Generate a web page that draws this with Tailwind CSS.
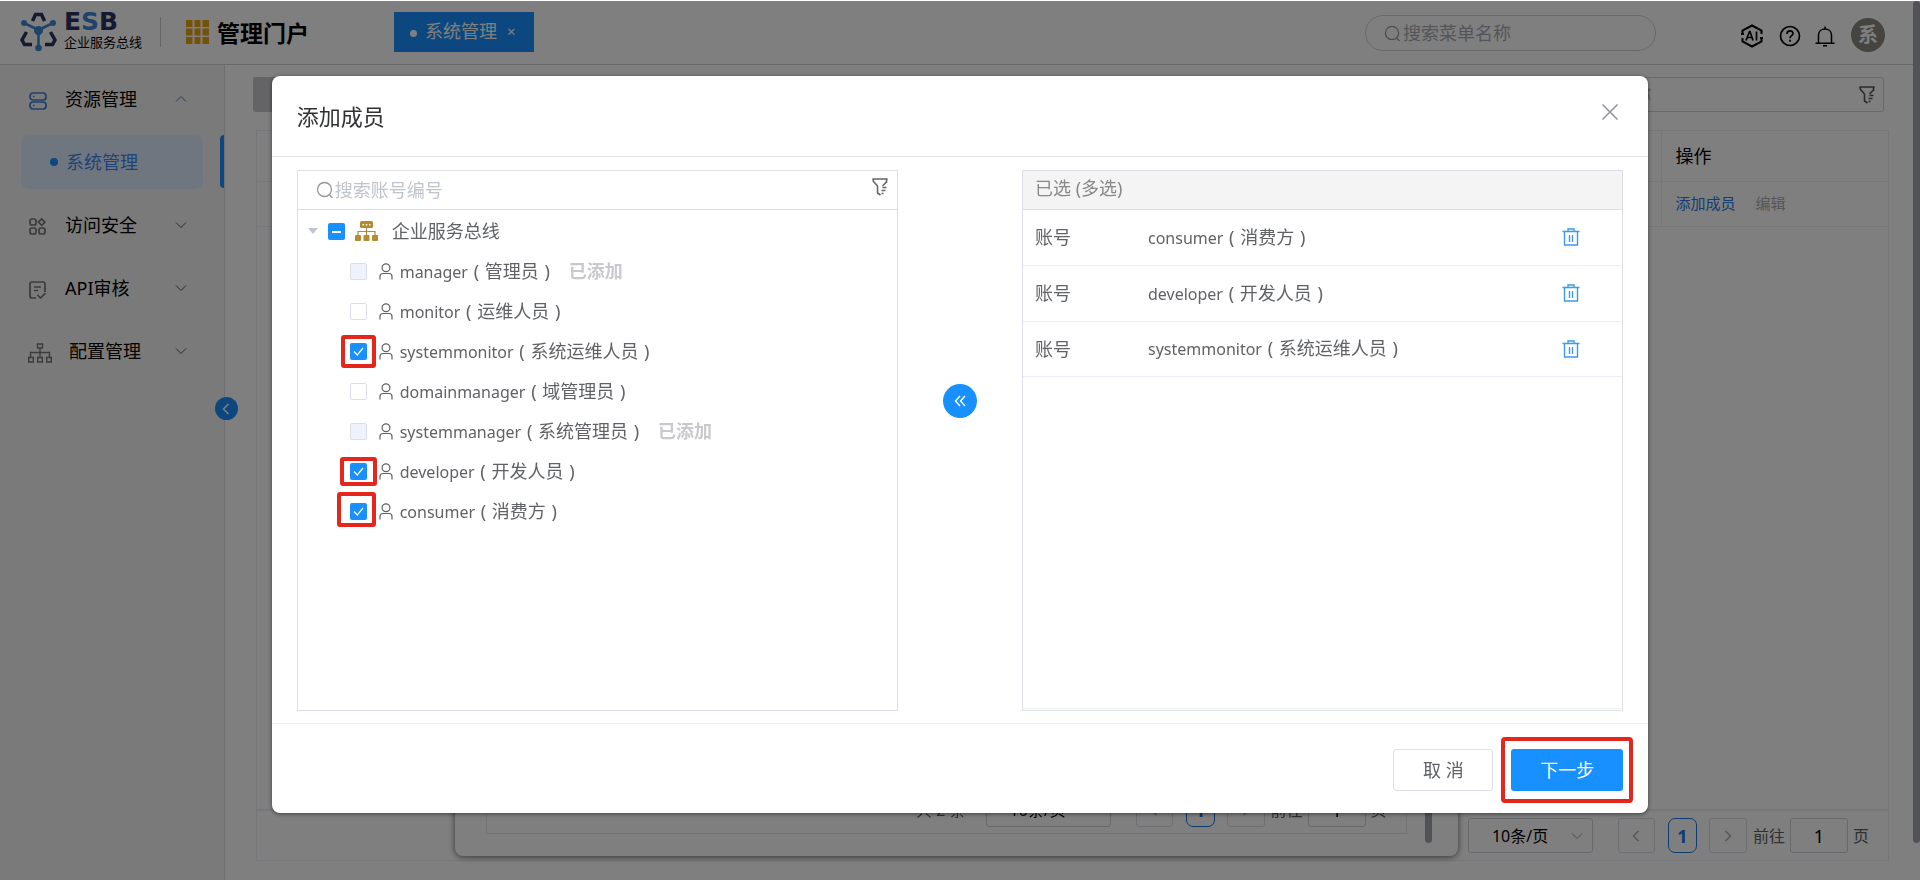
<!DOCTYPE html>
<html lang="zh-CN">
<head>
    <meta charset="UTF-8">
    <meta name="viewport" content="width=device-width, initial-scale=1.0">
    <title>ESB 管理门户 - 系统管理</title>
    <script src="https://cdn.jsdelivr.net/npm/@tailwindcss/browser@4"></script>
</head>
<body class="h-screen overflow-hidden bg-white font-['Noto_Sans','Noto_Sans_CJK_SC',sans-serif] text-[18px] leading-6 text-black">

    <!-- Icons shared by several places -->
    <svg class="hidden">
        <symbol id="i-search" viewBox="0 0 18 18"><circle cx="8.500" cy="8.500" r="7" fill="none" stroke="currentColor" stroke-width="1.300"/><path d="M13.500 14l3 3" stroke="currentColor" stroke-width="1.300"/></symbol>
        <symbol id="i-down" viewBox="0 0 12 8"><path d="M1 1.500l5 5 5-5" fill="none" stroke="currentColor" stroke-width="1"/></symbol>
        <symbol id="i-left" viewBox="0 0 8 12"><path d="M6.500 1l-5 5 5 5" fill="none" stroke="currentColor" stroke-width="1.500"/></symbol>
        <symbol id="i-funnel" viewBox="0 0 16 18"><path d="M14.500 5V2.500L15 1H1l.5 2.500L5.500 8v7l3 2M14.500 4L10.500 8M10.500 9.500h4M9.500 12.500h4M9.500 15.500h2" fill="none" stroke="currentColor" stroke-width="1.600" stroke-linejoin="round"/></symbol>
        <symbol id="i-user" viewBox="0 0 14 17"><circle cx="7" cy="4.700" r="3.900" fill="none" stroke="currentColor" stroke-width="1.200"/><path d="M1 16.500v-3c0-2 1-3 3-3h6c2 0 3 1 3 3v3" fill="none" stroke="currentColor" stroke-width="1.200"/></symbol>
        <symbol id="i-trash" viewBox="0 0 18 18"><path d="M.5 3.500h17M6 3V1h6v2M2.500 4v13h13V4M7.500 7v7M10.500 7v7" fill="none" stroke="currentColor" stroke-width="1.400"/></symbol>
        <symbol id="i-tick" viewBox="0 0 17 17"><path d="M4 8.500l3.300 3.500L13 5" fill="none" stroke="#fff" stroke-width="1.200"/></symbol>
    </svg>

    <div class="flex h-full flex-col">
        <header class="flex h-[65px] shrink-0 items-center border-b border-[#d4d4d4] pr-[35px] pl-[20px]">
            <svg class="h-[40px] w-[37px]" viewBox="0 0 37 40" fill="none">
                <path d="M12.500 9l3-6.500h6l3 6.500M6.500 20l-4.500 8 2.500 4.500h7.500M30.500 20l4.500 8-2.500 4.500H25" stroke="#2d3561" stroke-width="3.500"/>
                <path d="M4 11l14.500 7L33 11M18.500 19v16" stroke="#3f88d8" stroke-width="2.500"/>
                <circle cx="4" cy="11" r="3" fill="#3f88d8"/><circle cx="33" cy="11" r="3" fill="#3f88d8"/>
                <circle cx="18.500" cy="18.500" r="4.500" fill="#3f88d8"/><circle cx="18.500" cy="36" r="3.300" fill="#3f88d8"/>
            </svg>
            <div class="mb-[2px] ml-[7px] w-[80px] whitespace-nowrap">
                <div class="font-['DejaVu_Sans'] text-[25px] leading-[22px] font-bold text-[#2d3561]">E<span class="text-[#3f88d8]">S</span>B</div>
                <div class="text-[13px] leading-[18px]">企业服务总线</div>
            </div>
            <div class="ml-4 h-[30px] w-px bg-[#ccc]"></div>
            <svg class="ml-[25px] h-[24px] w-[23px]" viewBox="0 0 23 24" fill="#e6a410">
                <path d="M0 0h6.500v7H0zM8.500 0h6v7h-6zM16.500 0H23v7h-6.500zM0 8.500h6.500v7H0zM8.500 8.500h6v7h-6zM16.500 8.500H23v7h-6.500zM0 17h6.500v7H0zM8.500 17h6v7h-6zM16.500 17H23v7h-6.500z"/>
            </svg>
            <h1 class="mt-[2px] ml-2 w-[92px] text-[23px] font-bold whitespace-nowrap">管理门户</h1>
            <div class="ml-[85px] flex h-[40px] w-[140px] shrink-0 items-center bg-[#1890ff] pb-[2px] pl-4 text-white">
                <span class="mt-1 mr-2 size-[7px] rounded-full bg-white"></span>系统管理
                <button class="ml-[10px] text-[15px]" aria-label="关闭标签">×</button>
            </div>
            <label class="mt-[2px] ml-auto flex h-[36px] w-[291px] items-center rounded-full border border-[#d0d3d9] pl-[18px] text-[#999]">
                <svg class="size-[17px] shrink-0"><use href="#i-search"/></svg>
                <input class="ml-[2px] w-full min-w-0 text-[18px] outline-none placeholder:text-[#a8abb2]" placeholder="搜索菜单名称" aria-label="搜索菜单名称">
            </label>
            <button class="ml-[84px]" aria-label="AI 助手">
                <svg class="mt-2 h-[24px] w-[24px]" viewBox="0 0 24 24" fill="none" stroke="#000" stroke-width="2">
                    <path d="M2.500 10V6.500L12 1.500l9.500 5V10M2.500 14v3.500l9.500 5 9.500-5V14M1 10h3M20 14h3"/>
                    <path d="M6 16.500l3.500-9h.5l3 9M7.500 13.500h4.500M16.500 7.500v9" stroke-width="1.700"/>
                </svg>
            </button>
            <button class="ml-[15px]" aria-label="帮助">
                <svg class="mt-2 size-[22px]" viewBox="0 0 22 22" fill="none" stroke="#000" stroke-width="1.700">
                    <circle cx="11" cy="11" r="9.500"/><path d="M8 9c0-4 6-4 6-.5 0 2.200-3 2.200-3 4.700M11 14.800v2"/>
                </svg>
            </button>
            <button class="ml-[14px]" aria-label="通知">
                <svg class="mt-2 h-[22px] w-[20px]" viewBox="0 0 20 22" fill="none" stroke="#000" stroke-width="1.500">
                    <path d="M.5 18.200h19M3.500 18v-8c0-8 13-8 13 0v8M10 4V1.500M8 20.700h4"/>
                </svg>
            </button>
            <span class="mt-[6px] ml-4 flex size-[34px] items-center justify-center rounded-full bg-[#8d8881] text-[20px] font-bold text-white">系</span>
        </header>

        <div class="flex min-h-0 flex-1">
            <aside class="relative w-[225px] shrink-0 border-r border-[#dcdfe6] bg-[#f4f4f4] pt-[2px]">
                <nav>
                    <a href="#" class="flex h-[63px] items-center pl-[29px]">
                        <svg class="mt-1 h-[18px] w-[18px]" viewBox="0 0 18 18" fill="none" stroke="#3f7fd6" stroke-width="1.700"><rect x="1" y="1" width="16" height="7" rx="3"/><rect x="1" y="10" width="16" height="7" rx="3"/><path d="M4 4.500h1.500M4 13.500h1.500"/></svg>
                        <span class="ml-[18px] w-[110px]">资源管理</span>
                        <svg class="h-[8px] w-[12px] rotate-180 text-[#4a7fc0]"><use href="#i-down"/></svg>
                    </a>
                    <div class="flex h-[63px] items-center justify-between pl-[21px]">
                        <a href="#" class="flex h-[54px] w-[182px] items-center rounded-lg bg-[#e0edff] pl-[29px] text-[#3a86ee]"><span class="mr-2 size-[8px] rounded-full bg-[#1890ff]"></span>系统管理</a>
                        <span class="h-[53px] w-[4px] rounded-l bg-[#1890ff]"></span>
                    </div>
                    <a href="#" class="flex h-[63px] items-center pl-[29px]">
                        <svg class="mt-1 size-[17px]" viewBox="0 0 17 17" fill="none" stroke="#777" stroke-width="1.700"><rect x="1" y="1" width="6" height="6" rx="2"/><path d="M12.700.8l3.300 3.300-3.300 3.300L9.400 4.100z"/><rect x="1" y="10" width="6" height="6" rx="2"/><rect x="10" y="10" width="6" height="6" rx="2"/></svg>
                        <span class="ml-[19px] w-[110px]">访问安全</span>
                        <svg class="h-[8px] w-[12px] text-[#555]"><use href="#i-down"/></svg>
                    </a>
                    <a href="#" class="flex h-[63px] items-center pl-[29px]">
                        <svg class="mt-1 h-[18px] w-[17px]" viewBox="0 0 17 18" fill="none" stroke="#777" stroke-width="1.700"><path d="M16 11V3q0-2-2-2H3Q1 1 1 3v12q0 2 2 2h4M5 6h7M5 9.500h4M8.500 14l3 3 5-5"/></svg>
                        <span class="ml-[19px] w-[110px]">API审核</span>
                        <svg class="h-[8px] w-[12px] text-[#555]"><use href="#i-down"/></svg>
                    </a>
                    <a href="#" class="flex h-[63px] items-center pl-[28px]">
                        <svg class="mt-1 h-[20px] w-[24px]" viewBox="0 0 24 20" fill="none" stroke="#777" stroke-width="1.400"><path d="M9.500 1h5v4h-5zM12 5v9M2.500 14v-4.500h19V14M.7 14.500h4.600V19H.7zM9.700 14.500h4.600V19H9.700zM18.700 14.500h4.600V19h-4.600z"/></svg>
                        <span class="ml-[17px] w-[106px]">配置管理</span>
                        <svg class="h-[8px] w-[12px] text-[#555]"><use href="#i-down"/></svg>
                    </a>
                </nav>
                <button class="absolute top-[332px] -right-[14px] flex size-[23px] items-center justify-center rounded-full bg-[#1890ff] text-white" aria-label="收起菜单">
                    <svg class="mr-[2px] h-[12px] w-[8px]"><use href="#i-left"/></svg>
                </button>
            </aside>

            <main class="flex min-w-0 flex-1 flex-col pr-[31px] pb-[19px] pl-[31px]">
                <div class="-ml-[3px] flex h-[47px] items-end justify-between pr-[5px]">
                    <button class="h-[35px] w-[90px] rounded-[3px] bg-[#c8c9cc]" aria-label="新增"></button>
                    <label class="flex h-[35px] w-[360px] items-center rounded-[3px] border border-[#d0d3d9] px-2">
                        <input class="w-full min-w-0 pl-4 text-[17px] outline-none placeholder:text-[#a8abb2]" placeholder="搜索系统名称" aria-label="搜索系统名称">
                        <svg class="h-[18px] w-[16px] shrink-0 text-[#555]"><use href="#i-funnel"/></svg>
                    </label>
                </div>
                <div class="mt-[18px] flex min-h-0 flex-1 flex-col border border-[#ebeef5]">
                    <table class="w-full border-collapse text-left">
                        <thead>
                            <tr class="h-[50px] border-b border-[#ebeef5]"><th></th><th class="w-[227px] border-l border-[#ebeef5] pl-[14px] font-normal">操作</th></tr>
                        </thead>
                        <tbody>
                            <tr class="h-[45px] border-b border-[#ebeef5]"><td></td><td class="border-l border-[#ebeef5] pb-[2px] pl-[14px] text-[15px]"><a href="#" class="text-[#2a7ae4]">添加成员</a><a href="#" class="ml-5 text-[#a8abb2]">编辑</a></td></tr>
                        </tbody>
                    </table>
                    <div class="mt-auto flex h-[51px] items-center justify-end border-t-2 border-[#ebeef5] pr-[19px]">
                        <button class="flex h-[35px] w-[125px] items-center justify-between rounded-[3px] border border-[#d0d3d9] pr-[9px] pl-[23px] text-[16px]">10条/页<svg class="h-[8px] w-[12px] text-[#999]"><use href="#i-down"/></svg></button>
                        <button class="ml-[25px] flex h-[35px] w-[37px] items-center justify-center rounded-[3px] border border-[#dcdfe6] text-[#b0b0b0]" aria-label="上一页"><svg class="h-[12px] w-[8px]"><use href="#i-left"/></svg></button>
                        <button class="ml-[13px] h-[35px] w-[29px] rounded-[7px] border border-[#1879e0] font-bold text-[#1879e0]">1</button>
                        <button class="ml-3 flex h-[35px] w-[38px] items-center justify-center rounded-[3px] border border-[#dcdfe6] text-[#b0b0b0]" aria-label="下一页"><svg class="h-[12px] w-[8px] rotate-180"><use href="#i-left"/></svg></button>
                        <label class="ml-[6px] flex items-center text-[16px] text-[#606266]">前往<input class="mx-[5px] h-[35px] w-[58px] rounded-[3px] border border-[#d0d3d9] text-center text-[18px] text-black" value="1">页</label>
                    </div>
                </div>
            </main>
        </div>
    </div>

    <!-- First dialog, lies behind the mask -->
    <section class="fixed right-[7px] bottom-[24px] left-0 mx-auto flex h-[400px] w-[52.2%] flex-col rounded-lg bg-white pr-[51px] pb-[22px] pl-[31px] shadow-[0_1px_6px_rgba(0,0,0,0.6)]">
        <div class="flex flex-1 items-end justify-end border border-[#e4e7ed] pr-[19px] pb-[6px]">
            <span class="mr-[20px] self-end pb-[5px] text-[16px] text-[#606266]">共 2 条</span>
            <button class="flex h-[35px] w-[125px] items-center justify-between rounded-[3px] border border-[#d0d3d9] pr-[9px] pl-[23px] text-[16px]">10条/页</button>
            <button class="ml-[25px] flex h-[35px] w-[37px] items-center justify-center rounded-[3px] border border-[#dcdfe6] text-[#b0b0b0]" aria-label="上一页"><svg class="h-[12px] w-[8px]"><use href="#i-left"/></svg></button>
            <button class="ml-[13px] h-[35px] w-[29px] rounded-[7px] border border-[#1879e0] font-bold text-[#1879e0]">1</button>
            <button class="ml-3 flex h-[35px] w-[38px] items-center justify-center rounded-[3px] border border-[#dcdfe6] text-[#b0b0b0]" aria-label="下一页"><svg class="h-[12px] w-[8px] rotate-180"><use href="#i-left"/></svg></button>
            <label class="ml-[6px] flex items-center text-[16px] text-[#606266]">前往<input class="mx-[5px] h-[35px] w-[58px] rounded-[3px] border border-[#d0d3d9] text-center text-[18px] text-black" value="1">页</label>
        </div>
        <span class="absolute right-[26px] bottom-[13px] h-[200px] w-[7px] rounded-full bg-[#a3a6ad]"></span>
    </section>
    <span class="fixed top-px right-0 h-[842px] w-[7px] rounded-full bg-[#a3a6ad]"></span>

    <!-- Mask -->
    <div class="fixed inset-x-0 top-px bottom-0 bg-black/50"></div>

    <!-- Add member dialog -->
    <section role="dialog" aria-labelledby="dialog-title" class="fixed inset-x-0 top-[76px] mx-auto w-[71.7%] rounded-lg bg-white text-[#606266] shadow-[0_1px_4px_rgba(0,0,0,0.5)]">
        <div class="flex h-[81px] items-center justify-between border-b border-[#e4e4e4] pr-[30px] pl-[25px]">
            <h2 id="dialog-title" class="text-[22px] text-[#303133]">添加成员</h2>
            <button class="mb-2 text-[#909399]" aria-label="关闭"><svg class="size-[16px]" viewBox="0 0 16 16" stroke="currentColor" stroke-width="1.500"><path d="M.5.5l15 15M15.500.5l-15 15"/></svg></button>
        </div>

        <div class="flex h-[566px] px-[25px] pt-[13px] pb-3">
            <div class="flex-1 border border-[#dcdfe6]">
                <label class="flex h-[39px] items-center border-b border-[#dcdfe6] pr-[9px] pl-[18px] text-[#909399]">
                    <svg class="size-[18px] shrink-0"><use href="#i-search"/></svg>
                    <input class="ml-px w-full min-w-0 outline-none placeholder:text-[#c0c4cc]" placeholder="搜索账号编号" aria-label="搜索账号编号">
                    <svg class="mb-[6px] h-[18px] w-[16px] shrink-0 text-[#666]"><use href="#i-funnel"/></svg>
                </label>
                <ul class="pt-px pl-[10px]">
                    <li class="flex h-[40px] items-center">
                        <svg class="h-[6px] w-[10px]" viewBox="0 0 10 6" fill="#c0c4cc"><path d="M0 0h10L5 6z"/></svg>
                        <label class="flex items-center">
                            <span class="relative ml-[10px] size-[17px]">
                                <input type="checkbox" checked class="block size-[17px] appearance-none rounded-[2px] bg-[#1890ff]">
                                <span class="pointer-events-none absolute top-2 left-1 h-[2px] w-[9px] bg-white"></span>
                            </span>
                            <svg class="ml-[10px] h-[20px] w-[23px]" viewBox="0 0 23 20" fill="#b58a35"><rect x="5" width="13" height="7" rx="1.500"/><rect y="14" width="6" height="6" rx="1"/><rect x="8.500" y="14" width="6" height="6" rx="1"/><rect x="17" y="14" width="6" height="6" rx="1"/><path d="M11.500 7v7M3 14v-3.500h17V14" fill="none" stroke="#b58a35" stroke-width="1.200"/><path d="M7.500 3h1.500v1.500H7.500zM10.800 3h1.500v1.500h-1.500zM14 3h1.500v1.500H14z" fill="#fff"/></svg>
                            <span class="ml-[14px]">企业服务总线</span>
                        </label>
                    </li>
                    <li class="flex h-[40px] items-center pl-[42px]">
                        <label class="flex items-center">
                            <input type="checkbox" disabled class="size-[17px] appearance-none rounded-[2px] border border-[#dcdfe6] bg-[#edf2fc]">
                            <svg class="ml-3 h-[17px] w-[14px]"><use href="#i-user"/></svg>
                            <span class="ml-[7px]"><span class="text-[16px]">manager</span> <span class="px-px">(</span> 管理员 <span class="px-px">)</span></span>
                        </label>
                        <span class="ml-[18px] text-[18px] font-bold text-[#c8c9cc]">已添加</span>
                    </li>
                    <li class="flex h-[40px] items-center pl-[42px]">
                        <label class="flex items-center">
                            <input type="checkbox" class="size-[17px] appearance-none rounded-[2px] border border-[#dcdfe6]">
                            <svg class="ml-3 h-[17px] w-[14px]"><use href="#i-user"/></svg>
                            <span class="ml-[7px]"><span class="text-[16px]">monitor</span> <span class="px-px">(</span> 运维人员 <span class="px-px">)</span></span>
                        </label>
                    </li>
                    <li class="flex h-[40px] items-center pl-[42px]">
                        <label class="flex items-center">
                            <span class="relative size-[17px]">
                                <input type="checkbox" checked class="block size-[17px] appearance-none rounded-[2px] bg-[#1890ff]">
                                <svg class="pointer-events-none absolute inset-0 size-[17px]"><use href="#i-tick"/></svg>
                                <span class="absolute -inset-x-[9px] -inset-y-2 rounded-[3px] border-4 border-[#e5261c]"></span>
                            </span>
                            <svg class="ml-3 h-[17px] w-[14px]"><use href="#i-user"/></svg>
                            <span class="ml-[7px]"><span class="text-[16px]">systemmonitor</span> <span class="px-px">(</span> 系统运维人员 <span class="px-px">)</span></span>
                        </label>
                    </li>
                    <li class="flex h-[40px] items-center pl-[42px]">
                        <label class="flex items-center">
                            <input type="checkbox" class="size-[17px] appearance-none rounded-[2px] border border-[#dcdfe6]">
                            <svg class="ml-3 h-[17px] w-[14px]"><use href="#i-user"/></svg>
                            <span class="ml-[7px]"><span class="text-[16px]">domainmanager</span> <span class="px-px">(</span> 域管理员 <span class="px-px">)</span></span>
                        </label>
                    </li>
                    <li class="flex h-[40px] items-center pl-[42px]">
                        <label class="flex items-center">
                            <input type="checkbox" disabled class="size-[17px] appearance-none rounded-[2px] border border-[#dcdfe6] bg-[#edf2fc]">
                            <svg class="ml-3 h-[17px] w-[14px]"><use href="#i-user"/></svg>
                            <span class="ml-[7px]"><span class="text-[16px]">systemmanager</span> <span class="px-px">(</span> 系统管理员 <span class="px-px">)</span></span>
                        </label>
                        <span class="ml-[18px] text-[18px] font-bold text-[#c8c9cc]">已添加</span>
                    </li>
                    <li class="flex h-[40px] items-center pl-[42px]">
                        <label class="flex items-center">
                            <span class="relative size-[17px]">
                                <input type="checkbox" checked class="block size-[17px] appearance-none rounded-[2px] bg-[#1890ff]">
                                <svg class="pointer-events-none absolute inset-0 size-[17px]"><use href="#i-tick"/></svg>
                                <span class="absolute -inset-x-[10px] -inset-y-[6px] rounded-[3px] border-4 border-[#e5261c]"></span>
                            </span>
                            <svg class="ml-3 h-[17px] w-[14px]"><use href="#i-user"/></svg>
                            <span class="ml-[7px]"><span class="text-[16px]">developer</span> <span class="px-px">(</span> 开发人员 <span class="px-px">)</span></span>
                        </label>
                    </li>
                    <li class="flex h-[40px] items-center pl-[42px]">
                        <label class="flex items-center">
                            <span class="relative size-[17px]">
                                <input type="checkbox" checked class="block size-[17px] appearance-none rounded-[2px] bg-[#1890ff]">
                                <svg class="pointer-events-none absolute inset-0 size-[17px]"><use href="#i-tick"/></svg>
                                <span class="absolute -top-[11px] -right-[9px] -bottom-[7px] -left-[13px] rounded-[3px] border-4 border-[#e5261c]"></span>
                            </span>
                            <svg class="ml-3 h-[17px] w-[14px]"><use href="#i-user"/></svg>
                            <span class="ml-[7px]"><span class="text-[16px]">consumer</span> <span class="px-px">(</span> 消费方 <span class="px-px">)</span></span>
                        </label>
                    </li>
                </ul>
            </div>

            <div class="flex w-[124px] items-center justify-center">
                <button class="mb-[80px] flex size-[34px] items-center justify-center rounded-full bg-[#1890ff]" aria-label="收起"><svg class="size-[12px]" viewBox="0 0 12 12" fill="none" stroke="#fff" stroke-width="1.400"><path d="M6 1L1.500 6 6 11M11 1L6.500 6 11 11"/></svg></button>
            </div>

            <div class="flex flex-1 flex-col border border-[#dcdfe6]">
                <table class="w-full border-collapse text-left">
                    <thead>
                        <tr class="h-[38px] border-b border-[#dcdfe6] bg-[#f4f4f4] text-[#888]"><th colspan="3" class="pb-1 pl-3 font-normal">已选 (多选)</th></tr>
                    </thead>
                    <tbody>
                        <tr class="h-[56px] border-b border-[#ebeef5]">
                            <td class="w-[125px] pl-3">账号</td>
                            <td><span class="text-[16px]">consumer</span> <span class="px-px">(</span> 消费方 <span class="px-px">)</span></td>
                            <td class="w-[60px]"><button class="block text-[#3b9be8]" aria-label="删除"><svg class="size-[18px]"><use href="#i-trash"/></svg></button></td>
                        </tr>
                        <tr class="h-[56px] border-b border-[#ebeef5]">
                            <td class="pl-3">账号</td>
                            <td><span class="text-[16px]">developer</span> <span class="px-px">(</span> 开发人员 <span class="px-px">)</span></td>
                            <td><button class="block text-[#3b9be8]" aria-label="删除"><svg class="size-[18px]"><use href="#i-trash"/></svg></button></td>
                        </tr>
                        <tr class="h-[55px] border-b border-[#ebeef5]">
                            <td class="pl-3">账号</td>
                            <td><span class="text-[16px]">systemmonitor</span> <span class="px-px">(</span> 系统运维人员 <span class="px-px">)</span></td>
                            <td><button class="block text-[#3b9be8]" aria-label="删除"><svg class="size-[18px]"><use href="#i-trash"/></svg></button></td>
                        </tr>
                    </tbody>
                </table>
                <div class="mt-auto mb-px h-px bg-[#ebeef5]"></div>
            </div>
        </div>

        <div class="flex h-[90px] items-start justify-end border-t border-[#ebeef5] pt-[25px] pr-[25px]">
            <button class="h-[42px] w-[100px] rounded-[3px] border border-[#dcdfe6]">取 消</button>
            <div class="relative ml-[18px]">
                <button class="h-[42px] w-[112px] rounded-[3px] bg-[#1890ff] text-white">下一步</button>
                <span class="pointer-events-none absolute -inset-x-[10px] -inset-y-3 rounded-[4px] border-4 border-[#e5261c]"></span>
            </div>
        </div>
    </section>
</body>
</html>
